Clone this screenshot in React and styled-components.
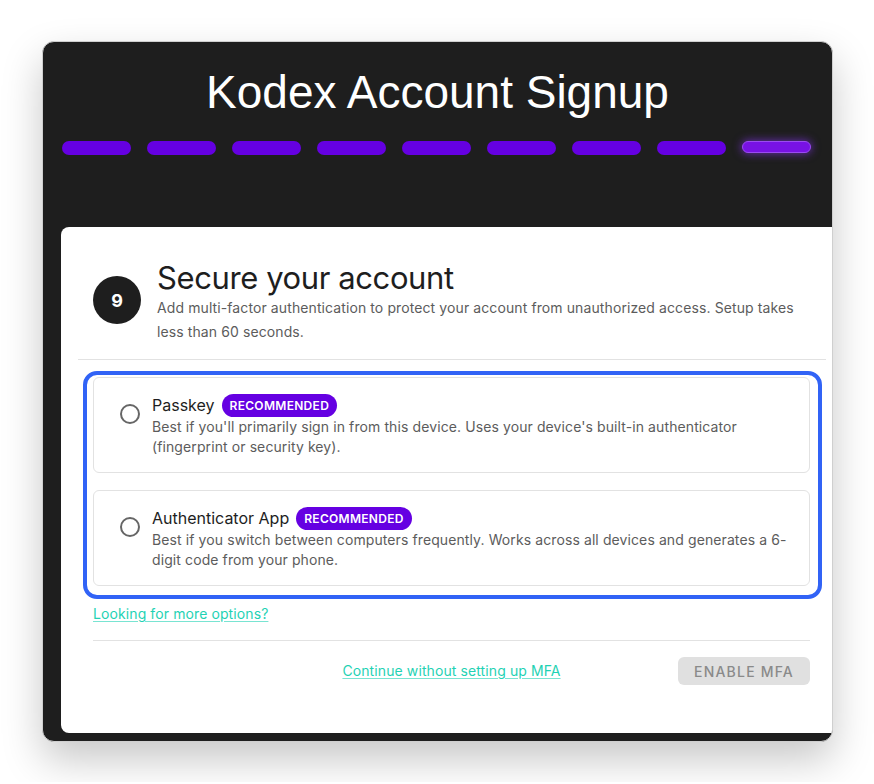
import React from "react";
import styled, { createGlobalStyle } from "styled-components";

const purple = "#6500e2";
const teal = "#1fd2b4";
const ink = "#1e1e1e";
const muted = "#5c5c5c";
const line = "#e2e2e2";

const GlobalStyle = createGlobalStyle`
  body {
    margin: 0;
    background: #ffffff;
    font-family: Inter, "Noto Sans", sans-serif;
    color: ${ink};
  }
`;

const Page = styled.div`
  padding: 41px 0 40px 42px;
`;

const Window = styled.div`
  box-sizing: border-box;
  width: 791px;
  height: 701px;
  display: flex;
  flex-direction: column;
  background: #1e1e1e;
  border: 1px solid #cfcfcf;
  border-radius: 12px;
  overflow: hidden;
  box-shadow: 0 18px 40px rgba(0, 0, 0, 0.22);
`;

const Title = styled.h1`
  margin: 24px 0 0;
  font-family: "Liberation Sans", Arial, sans-serif;
  font-size: 46px;
  font-weight: 400;
  line-height: 52px;
  text-align: center;
  color: #ffffff;
`;

const Steps = styled.div`
  display: flex;
  gap: 16px;
  margin-top: 23px;
  padding-left: 19px;
`;

const StepBar = styled.span`
  flex: 0 0 69px;
  height: ${(p) => (p.$current ? "12px" : "14px")};
  border-radius: 7px;
  box-sizing: border-box;
  background: ${(p) => (p.$current ? "#7812e4" : purple)};
  border: ${(p) => (p.$current ? "1px solid #9a4cf0" : "none")};
  box-shadow: ${(p) =>
    p.$current ? "0 0 8px 1px rgba(130, 50, 235, 0.65)" : "none"};
`;

const Card = styled.section`
  flex: 1;
  display: flex;
  flex-direction: column;
  margin: 72px 0 8px 18px;
  padding: 33px 6px 0 17px;
  background: #ffffff;
  border-radius: 8px 0 0 8px;
`;

const Header = styled.header`
  display: flex;
  align-items: center;
  gap: 16px;
  padding: 0 16px 0 15px;
`;

const StepNumber = styled.div`
  flex: 0 0 48px;
  height: 48px;
  margin-top: -4px;
  border-radius: 50%;
  background: ${ink};
  color: #ffffff;
  display: flex;
  align-items: center;
  justify-content: center;
  font-size: 18px;
  font-weight: 700;
`;

const Heading = styled.h2`
  margin: 0;
  font-size: 31px;
  font-weight: 400;
  letter-spacing: -0.4px;
  line-height: 36px;
  color: ${ink};
`;

const Lead = styled.p`
  margin: 0;
  font-size: 14px;
  line-height: 24px;
  letter-spacing: 0.1px;
  color: ${muted};
`;

const Rule = styled.hr`
  margin: ${(p) => p.$gap} 0 0;
  border: 0;
  border-top: 1px solid ${line};
`;

const Body = styled.div`
  display: flex;
  flex-direction: column;
  padding: 0 16px 0 15px;
`;

const OptionGroup = styled.div`
  display: flex;
  flex-direction: column;
  gap: 17px;
  margin: 11px -12px 0 -10px;
  padding: 2px 8px 9px 6px;
  border: 4px solid #3163f6;
  border-radius: 14px;
`;

const Option = styled.label`
  display: flex;
  align-items: flex-start;
  gap: 12px;
  padding: 15px 20px 15px 26px;
  border: 1px solid ${line};
  border-radius: 6px;
  cursor: pointer;
`;

const Radio = styled.span`
  flex: 0 0 20px;
  height: 20px;
  box-sizing: border-box;
  margin-top: 11px;
  border: 2px solid #666666;
  border-radius: 50%;
`;

const OptionText = styled.div`
  display: flex;
  flex-direction: column;
`;

const OptionTitle = styled.div`
  display: flex;
  align-items: center;
  gap: 7px;
  height: 24px;
  font-size: 16px;
  color: ${ink};
`;

const Badge = styled.span`
  height: 23px;
  padding: 0 8px;
  border-radius: 12px;
  background: ${purple};
  color: #ffffff;
  font-size: 12px;
  font-weight: 600;
  letter-spacing: 0.3px;
  line-height: 23px;
`;

const OptionDesc = styled.p`
  margin: 0;
  font-size: 14px;
  line-height: 20px;
  letter-spacing: 0.1px;
  color: ${muted};
`;

const TextLink = styled.a`
  font-size: 14px;
  line-height: 20px;
  letter-spacing: 0.1px;
  color: ${teal};
  text-decoration: underline;
  text-decoration-color: rgba(31, 210, 180, 0.6);
  text-underline-offset: 2px;
  cursor: pointer;
`;

const MoreLink = styled(TextLink)`
  align-self: flex-start;
  margin-top: 5px;
`;

const Footer = styled.footer`
  display: grid;
  grid-template-columns: 1fr auto 1fr;
  align-items: center;
  padding-top: 16px;
`;

const EnableButton = styled.button`
  justify-self: end;
  height: 28px;
  padding: 0 16px;
  border: 0;
  border-radius: 6px;
  background: #e0e0e0;
  color: #8a8a8a;
  font-family: inherit;
  font-size: 14px;
  font-weight: 500;
  letter-spacing: 1.2px;
`;

const options = [
  {
    name: "Passkey",
    desc: "Best if you'll primarily sign in from this device. Uses your device's built-in authenticator (fingerprint or security key).",
  },
  {
    name: "Authenticator App",
    desc: "Best if you switch between computers frequently. Works across all devices and generates a 6-digit code from your phone.",
  },
];

export default function App() {
  return (
    <>
      <GlobalStyle />
      <Page>
        <Window>
          <Title>Kodex Account Signup</Title>
          <Steps>
            {Array.from({ length: 9 }, (_, i) => (
              <StepBar key={i} $current={i === 8} />
            ))}
          </Steps>
          <Card>
            <Header>
              <StepNumber>9</StepNumber>
              <div>
                <Heading>Secure your account</Heading>
                <Lead>
                  Add multi-factor authentication to protect your account from
                  unauthorized access. Setup takes less than 60 seconds.
                </Lead>
              </div>
            </Header>
            <Rule $gap="15px" />
            <Body>
              <OptionGroup>
                {options.map((o) => (
                  <Option key={o.name}>
                    <Radio />
                    <OptionText>
                      <OptionTitle>
                        {o.name}
                        <Badge>RECOMMENDED</Badge>
                      </OptionTitle>
                      <OptionDesc>{o.desc}</OptionDesc>
                    </OptionText>
                  </Option>
                ))}
              </OptionGroup>
              <MoreLink>Looking for more options?</MoreLink>
              <Rule $gap="16px" />
              <Footer>
                <span />
                <TextLink>Continue without setting up MFA</TextLink>
                <EnableButton>ENABLE MFA</EnableButton>
              </Footer>
            </Body>
          </Card>
        </Window>
      </Page>
    </>
  );
}
